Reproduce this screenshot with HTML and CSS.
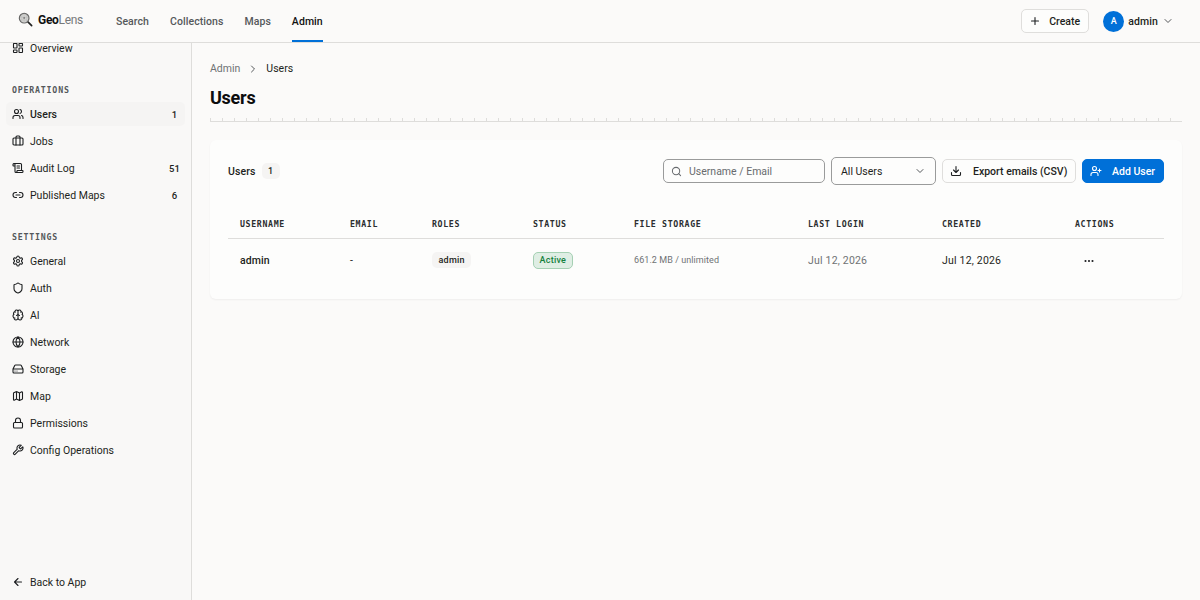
FILE: index.html
```html
<!DOCTYPE html>
<html lang="en">
<head>
    <meta charset="UTF-8">
    <meta name="viewport" content="width=device-width, initial-scale=1.0">
    <title>Users - GeoLens Admin</title>
    <link rel="stylesheet" href="styles.css">
</head>
<body>
    <header class="topbar">
        <a class="brand" href="#">
            <svg class="brand-icon" viewBox="0 0 28 28">
                <path d="M18.5 18.5l7 7" stroke="#222" stroke-width="3" stroke-linecap="round"/>
                <circle cx="11.5" cy="11.5" r="9" fill="#d2d2d0" stroke="#666" stroke-width="2.2"/>
                <path d="M4 10h15M5 15h13M11.5 3v17M7 5v13M16 5v13" stroke="#bbb" stroke-width="1" fill="none"/>
                <circle cx="11.5" cy="11" r="1.6" fill="#777"/>
            </svg>
            <span class="brand-name"><b>Geo</b>Lens</span>
        </a>
        <nav class="main-nav">
            <a href="#">Search</a>
            <a href="#">Collections</a>
            <a href="#">Maps</a>
            <a href="#" class="active">Admin</a>
        </nav>
        <div class="topbar-right">
            <button class="btn create"><svg class="icon" viewBox="0 0 24 24"><path d="M5 12h14M12 5v14"/></svg>Create</button>
            <button class="account">
                <span class="avatar">A</span>
                <span class="account-name">admin</span>
                <svg class="icon chevron" viewBox="0 0 24 24"><path d="m6 9 6 6 6-6"/></svg>
            </button>
        </div>
    </header>

    <div class="layout">
        <aside class="sidebar">
            <div class="side-scroll">
                <a class="side-link overview" href="#"><svg class="icon" viewBox="0 0 24 24"><rect width="7" height="9" x="3" y="3" rx="1"/><rect width="7" height="5" x="14" y="3" rx="1"/><rect width="7" height="9" x="14" y="12" rx="1"/><rect width="7" height="5" x="3" y="16" rx="1"/></svg>Overview</a>

                <h3 class="side-title">Operations</h3>
                <a class="side-link active" href="#"><svg class="icon" viewBox="0 0 24 24"><path d="M16 21v-2a4 4 0 0 0-4-4H6a4 4 0 0 0-4 4v2"/><circle cx="9" cy="7" r="4"/><path d="M22 21v-2a4 4 0 0 0-3-3.87M16 3.13a4 4 0 0 1 0 7.75"/></svg>Users<span class="count">1</span></a>
                <a class="side-link" href="#"><svg class="icon" viewBox="0 0 24 24"><path d="M16 20V4a2 2 0 0 0-2-2h-4a2 2 0 0 0-2 2v16"/><rect width="20" height="14" x="2" y="6" rx="2"/></svg>Jobs</a>
                <a class="side-link" href="#"><svg class="icon" viewBox="0 0 24 24"><path d="M15 12h-5M15 8h-5M19 17V5a2 2 0 0 0-2-2H4"/><path d="M8 21h12a2 2 0 0 0 2-2v-1a1 1 0 0 0-1-1H11a1 1 0 0 0-1 1v1a2 2 0 1 1-4 0V5a2 2 0 1 0-4 0v2a1 1 0 0 0 1 1h3"/></svg>Audit Log<span class="count">51</span></a>
                <a class="side-link" href="#"><svg class="icon" viewBox="0 0 24 24"><path d="M9 17H7A5 5 0 0 1 7 7h2M15 7h2a5 5 0 1 1 0 10h-2M8 12h8"/></svg>Published Maps<span class="count">6</span></a>

                <h3 class="side-title">Settings</h3>
                <a class="side-link" href="#"><svg class="icon" viewBox="0 0 24 24"><path d="M9.671 4.136a2.34 2.34 0 0 1 4.659 0 2.34 2.34 0 0 0 3.319 1.915 2.34 2.34 0 0 1 2.33 4.033 2.34 2.34 0 0 0 0 3.831 2.34 2.34 0 0 1-2.33 4.033 2.34 2.34 0 0 0-3.319 1.915 2.34 2.34 0 0 1-4.659 0 2.34 2.34 0 0 0-3.32-1.915 2.34 2.34 0 0 1-2.33-4.033 2.34 2.34 0 0 0 0-3.831A2.34 2.34 0 0 1 6.35 6.051a2.34 2.34 0 0 0 3.319-1.915"/><circle cx="12" cy="12" r="3"/></svg>General</a>
                <a class="side-link" href="#"><svg class="icon" viewBox="0 0 24 24"><path d="M20 13c0 5-3.5 7.5-7.66 8.95a1 1 0 0 1-.67-.01C7.5 20.5 4 18 4 13V6a1 1 0 0 1 1-1c2 0 4.5-1.2 6.24-2.72a1.17 1.17 0 0 1 1.52 0C14.51 3.81 17 5 19 5a1 1 0 0 1 1 1z"/></svg>Auth</a>
                <a class="side-link" href="#"><svg class="icon" viewBox="0 0 24 24"><path d="M12 18V5M15 13a4.17 4.17 0 0 1-3-4 4.17 4.17 0 0 1-3 4M17.598 6.5A3 3 0 1 0 12 5a3 3 0 1 0-5.598 1.5M17.997 5.125a4 4 0 0 1 2.526 5.77M18 18a4 4 0 0 0 2-7.464M19.967 17.483A4 4 0 1 1 12 18a4 4 0 1 1-7.967-.517M6 18a4 4 0 0 1-2-7.464M6.003 5.125a4 4 0 0 0-2.526 5.77"/></svg>AI</a>
                <a class="side-link" href="#"><svg class="icon" viewBox="0 0 24 24"><circle cx="12" cy="12" r="10"/><path d="M12 2a14.5 14.5 0 0 0 0 20 14.5 14.5 0 0 0 0-20M2 12h20"/></svg>Network</a>
                <a class="side-link" href="#"><svg class="icon" viewBox="0 0 24 24"><path d="M22 12H2M5.45 5.11 2 12v6a2 2 0 0 0 2 2h16a2 2 0 0 0 2-2v-6l-3.45-6.89A2 2 0 0 0 16.76 4H7.24a2 2 0 0 0-1.79 1.11zM6 16h.01M10 16h.01"/></svg>Storage</a>
                <a class="side-link" href="#"><svg class="icon" viewBox="0 0 24 24"><path d="M14.106 5.553a2 2 0 0 0 1.788 0l3.659-1.83A1 1 0 0 1 21 4.619v12.764a1 1 0 0 1-.553.894l-4.553 2.277a2 2 0 0 1-1.788 0l-4.212-2.106a2 2 0 0 0-1.788 0l-3.659 1.83A1 1 0 0 1 3 19.381V6.618a1 1 0 0 1 .553-.894l4.553-2.277a2 2 0 0 1 1.788 0zM15 5.764v15M9 3.236v15"/></svg>Map</a>
                <a class="side-link" href="#"><svg class="icon" viewBox="0 0 24 24"><rect width="18" height="11" x="3" y="11" rx="2"/><path d="M7 11V7a5 5 0 0 1 10 0v4"/></svg>Permissions</a>
                <a class="side-link" href="#"><svg class="icon" viewBox="0 0 24 24"><path d="M14.7 6.3a1 1 0 0 0 0 1.4l1.6 1.6a1 1 0 0 0 1.4 0l3.77-3.77a6 6 0 0 1-7.94 7.94l-6.91 6.91a2.12 2.12 0 0 1-3-3l6.91-6.91a6 6 0 0 1 7.94-7.94z"/></svg>Config Operations</a>
            </div>
            <a class="side-link back" href="#"><svg class="icon" viewBox="0 0 24 24"><path d="m12 19-7-7 7-7M19 12H5"/></svg>Back to App</a>
        </aside>

        <main class="content">
            <div class="breadcrumb">
                <a href="#">Admin</a>
                <svg class="icon" viewBox="0 0 24 24"><path d="m9 18 6-6-6-6"/></svg>
                <span>Users</span>
            </div>
            <h1>Users</h1>
            <div class="ruler"></div>

            <section class="card">
                <div class="card-head">
                    <h2>Users</h2>
                    <span class="badge total">1</span>
                    <div class="tools">
                        <label class="search">
                            <svg class="icon" viewBox="0 0 24 24"><circle cx="11" cy="11" r="8"/><path d="m21 21-4.3-4.3"/></svg>
                            <input type="text" placeholder="Username / Email">
                        </label>
                        <button class="select">All Users<svg class="icon chevron" viewBox="0 0 24 24"><path d="m6 9 6 6 6-6"/></svg></button>
                        <button class="btn export"><svg class="icon" viewBox="0 0 24 24"><path d="M21 15v4a2 2 0 0 1-2 2H5a2 2 0 0 1-2-2v-4M7 10l5 5 5-5M12 15V3"/></svg>Export emails (CSV)</button>
                        <button class="btn primary"><svg class="icon" viewBox="0 0 24 24"><path d="M16 21v-2a4 4 0 0 0-4-4H6a4 4 0 0 0-4 4v2"/><circle cx="9" cy="7" r="4"/><path d="M19 8v6M22 11h-6"/></svg>Add User</button>
                    </div>
                </div>

                <table class="users">
                    <colgroup>
                        <col class="c-name"><col class="c-email"><col class="c-roles"><col class="c-status">
                        <col class="c-storage"><col class="c-login"><col class="c-created"><col>
                    </colgroup>
                    <thead>
                        <tr>
                            <th>Username</th>
                            <th>Email</th>
                            <th>Roles</th>
                            <th>Status</th>
                            <th>File Storage</th>
                            <th>Last Login</th>
                            <th>Created</th>
                            <th>Actions</th>
                        </tr>
                    </thead>
                    <tbody>
                        <tr>
                            <td class="name">admin</td>
                            <td>-</td>
                            <td><span class="badge role">admin</span></td>
                            <td><span class="badge status">Active</span></td>
                            <td class="storage">661.2 MB / unlimited</td>
                            <td class="date muted">Jul 12, 2026</td>
                            <td class="date">Jul 12, 2026</td>
                            <td><button class="more"><svg class="icon" viewBox="0 0 24 24"><circle cx="12" cy="12" r="1"/><circle cx="19" cy="12" r="1"/><circle cx="5" cy="12" r="1"/></svg></button></td>
                        </tr>
                    </tbody>
                </table>
            </section>
        </main>
    </div>
</body>
</html>
```

FILE: styles.css
```css
* {
    box-sizing: border-box;
}
body {
    margin: 0;
    height: 100vh;
    overflow: hidden;
    display: flex;
    flex-direction: column;
    font-family: Roboto, "Noto Sans", sans-serif;
    font-size: 10.5px;
    line-height: 15px;
    color: #1d1f21;
    background-color: #fbfaf9;
}
a {
    color: inherit;
    text-decoration: none;
}
button {
    font: inherit;
    color: inherit;
    cursor: pointer;
}
.icon {
    width: 12px;
    height: 12px;
    flex: none;
    fill: none;
    stroke: currentColor;
    stroke-width: 2.2;
    stroke-linecap: round;
    stroke-linejoin: round;
}
.topbar {
    flex: none;
    height: 43px;
    display: flex;
    align-items: center;
    padding: 0 26px 0 18px;
    border-bottom: 1px solid #dedddb;
}
.brand {
    display: flex;
    align-items: center;
    width: 98px;
    padding-bottom: 3px;
}
.brand-icon {
    width: 15px;
    height: 15px;
    fill: none;
}
.brand-name {
    margin-left: 5px;
    padding-top: 1px;
    font-size: 12px;
    color: #77797b;
    letter-spacing: -0.3px;
}
.brand-name b {
    color: #111;
}
.main-nav {
    display: flex;
    align-self: stretch;
    gap: 21px;
    font-weight: 500;
    letter-spacing: 0.07px;
    color: #55585b;
}
.main-nav a {
    line-height: 43px;
}
.main-nav .active {
    color: #111;
    box-shadow: inset 0 -2px #0070d8;
}
.topbar-right {
    margin-left: auto;
    display: flex;
    align-items: center;
    gap: 14px;
}
.btn {
    height: 24px;
    display: flex;
    align-items: center;
    padding: 0 8px 0 7px;
    gap: 11px;
    font-weight: 500;
    background-color: #fdfdfc;
    border: 1px solid #dfdedc;
    border-radius: 5px;
    white-space: nowrap;
}
.create {
    width: 68px;
    gap: 8px;
}
.account {
    display: flex;
    align-items: center;
    padding: 0;
    background: none;
    border: none;
    font-weight: 500;
}
.account-name {
    letter-spacing: 0.1px;
}
.avatar {
    width: 21px;
    height: 21px;
    margin-right: 4px;
    border-radius: 50%;
    background-color: #0070d8;
    color: #fff;
    font-size: 9px;
    line-height: 21px;
    text-align: center;
}
.chevron {
    color: #55585b;
    stroke-width: 2;
}
.account .chevron {
    margin-left: 4px;
}
.layout {
    flex: 1;
    min-height: 0;
    display: flex;
}
.sidebar {
    width: 192px;
    flex: none;
    display: flex;
    flex-direction: column;
    padding: 0 6px;
    background-color: #f9f8f7;
    border-right: 1px solid #dedddb;
}
.side-scroll {
    flex: 1;
    min-height: 0;
    overflow: hidden;
}
.side-link {
    height: 24px;
    display: flex;
    align-items: center;
    gap: 6px;
    margin-bottom: 3px;
    padding: 0 6px;
    border-radius: 5px;
}
.side-link.overview {
    margin-top: -7px;
}
.side-link.active {
    background-color: #f5f4f3;
    font-weight: 500;
}
.side-link.back {
    margin-bottom: 6px;
}
.count {
    width: 15px;
    margin-left: auto;
    margin-right: -3px;
    font-size: 9.5px;
    font-weight: 500;
    text-align: center;
}
.side-title {
    margin: 22px 0 4px;
    padding: 0 6px;
    font-family: "DejaVu Sans Mono", monospace;
    font-size: 8.25px;
    line-height: 16px;
    letter-spacing: 0.8px;
    text-transform: uppercase;
    color: #55585b;
}
.content {
    flex: 1;
    padding: 18px;
}
.breadcrumb {
    display: flex;
    align-items: center;
    gap: 7px;
}
.breadcrumb a {
    color: #6f7274;
}
.breadcrumb .icon {
    stroke-width: 2;
    color: #55585b;
}
h1 {
    margin: 10px 0 8px;
    font-size: 18px;
    line-height: 24px;
    letter-spacing: -0.25px;
    color: #0c0d0e;
}
.ruler {
    height: 4px;
    border-bottom: 1px solid #dedddb;
    background: repeating-linear-gradient(90deg, #dedddb 0 1px, transparent 1px 12px);
}
.card {
    height: 159px;
    margin-top: 18px;
    padding: 17px 18px;
    background-color: #fdfdfc;
    border-radius: 6px;
    box-shadow: 0 1px 2px rgba(0, 0, 0, 0.05);
}
.card-head {
    display: flex;
    align-items: center;
}
h2 {
    margin: 0 6px 0 0;
    font-size: 10.5px;
    font-weight: 500;
    letter-spacing: 0.1px;
}
.badge {
    display: inline-block;
    padding: 0 6px;
    border-radius: 5px;
    background-color: #f5f4f3;
    font-size: 9px;
    font-weight: 500;
    line-height: 16px;
    letter-spacing: 0.25px;
    vertical-align: middle;
}
.total {
    padding: 0 6.5px;
}
.role {
    padding: 0 6.5px;
    margin-bottom: 2px;
}
.tools {
    margin-left: auto;
    display: flex;
    align-items: center;
    gap: 6px;
}
.search {
    width: 162px;
    height: 24px;
    display: flex;
    align-items: center;
    padding: 0 7px;
    gap: 7px;
    border: 1px solid #9a9b9b;
    border-radius: 5px;
    color: #686b6e;
}
.search .icon {
    width: 11px;
    height: 11px;
}
.search input {
    width: 130px;
    padding: 0;
    border: none;
    outline: none;
    background: none;
    font: inherit;
}
.search input::placeholder {
    color: #686b6e;
}
.select {
    width: 105px;
    height: 28px;
    display: flex;
    align-items: center;
    justify-content: space-between;
    padding: 0 9px;
    background: none;
    border: 1px solid #9a9b9b;
    border-radius: 5px;
}
.export {
    width: 134px;
}
.btn.primary {
    width: 82px;
    gap: 10px;
    color: #fff;
    background-color: #0070d8;
    border-color: #0070d8;
}
.users {
    width: 100%;
    margin-top: 23px;
    border-collapse: collapse;
    table-layout: fixed;
}
.c-name { width: 110px; }
.c-email { width: 82px; }
.c-roles { width: 101px; }
.c-status { width: 101px; }
.c-storage { width: 174px; }
.c-login { width: 134px; }
.c-created { width: 133px; }
.users th,
.users td {
    padding: 0 12px;
    text-align: left;
    white-space: nowrap;
}
.users th {
    height: 30px;
    padding-top: 3px;
    font-family: "DejaVu Sans Mono", monospace;
    font-size: 8.25px;
    letter-spacing: 0.65px;
    text-transform: uppercase;
    color: #2b2d2f;
    border-bottom: 1px solid #dedddb;
}
.users td {
    height: 45px;
}
.users .name {
    font-weight: 500;
    letter-spacing: 0.1px;
}
.badge.status {
    padding: 0 5.5px;
    color: #157f3c;
    background-color: #dfeee4;
    border: 1px solid #a5d0b3;
    line-height: 15px;
}
.users .storage {
    font-size: 9px;
    letter-spacing: 0.07px;
    color: #6f7274;
}
.users .date {
    letter-spacing: 0.2px;
}
.users .muted {
    color: #6f7274;
}
.more {
    display: flex;
    padding: 0 8px;
    background: none;
    border: none;
}
```
